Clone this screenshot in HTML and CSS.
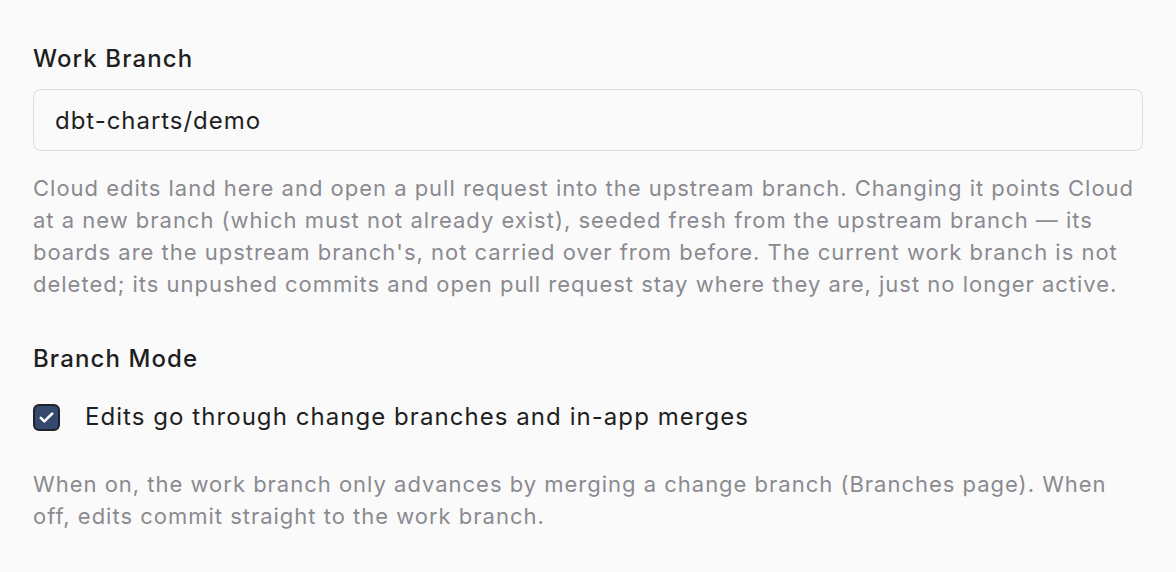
FILE: index.html
```html
<!DOCTYPE html>
<html lang="en">
<head>
<meta charset="utf-8">
<link rel="stylesheet" href="styles.css">
</head>
<body>
<main class="settings">
  <section class="field">
    <h2 class="label">Work Branch</h2>
    <input class="text-input" type="text" value="dbt-charts/demo">
    <p class="help">Cloud edits land here and open a pull request into the upstream branch. Changing it points Cloud at a new branch (which must not already exist), seeded fresh from the upstream branch — its boards are the upstream branch's, not carried over from before. The current work branch is not deleted; its unpushed commits and open pull request stay where they are, just no longer active.</p>
  </section>
  <section class="field field-mode">
    <h2 class="label">Branch Mode</h2>
    <label class="check-row">
      <span class="checkbox">
        <svg viewBox="0 0 24 24" width="21" height="21"><path d="M5.5 12.5l4 4 9-9" fill="none" stroke="#fff" stroke-width="3" stroke-linecap="round" stroke-linejoin="round"/></svg>
      </span>
      <span class="check-text">Edits go through change branches and in-app merges</span>
    </label>
    <p class="help help-mode">When on, the work branch only advances by merging a change branch (Branches page). When off, edits commit straight to the work branch.</p>
  </section>
</main>
</body>
</html>
```

FILE: styles.css
```css
* { box-sizing: border-box; }
html, body { margin: 0; background: #fafafa; }
body {
  font-family: Inter, "Noto Sans", sans-serif;
  color: #1f1f22;
}
.settings {
  padding: 43px 33px 0 33px;
  display: flex;
  flex-direction: column;
}
.field { display: flex; flex-direction: column; }
.label {
  margin: 0;
  font-size: 24px;
  line-height: 32px;
  font-weight: 500;
  letter-spacing: 0.046em;
  color: #1f1f22;
}
.text-input {
  margin-top: 14px;
  height: 62px;
  width: 100%;
  border: 1.5px solid #dedee2;
  border-radius: 8px;
  background: #fafafa;
  padding: 0 21px;
  font-family: Inter, "Noto Sans", sans-serif;
  letter-spacing: 0.04em;
  font-size: 24px;
  color: #1f1f22;
  outline: none;
}
.help {
  margin: 21px 0 0 0;
  font-size: 22px;
  line-height: 32px;
  letter-spacing: 0.045em;
  color: #8a8a90;
}
.field-mode { margin-top: 43px; }
.check-row {
  margin-top: 26px;
  display: flex;
  align-items: center;
  gap: 25px;
  height: 32px;
}
.checkbox {
  width: 27px;
  height: 27px;
  border-radius: 6px;
  background: #34496d;
  border: 2px solid #1f2329;
  display: flex;
  align-items: center;
  justify-content: center;
  flex: none;
}
.check-text {
  font-size: 24px;
  line-height: 32px;
  letter-spacing: 0.044em;
  color: #1f1f22;
}
.help-mode { margin-top: 35px; }
```
